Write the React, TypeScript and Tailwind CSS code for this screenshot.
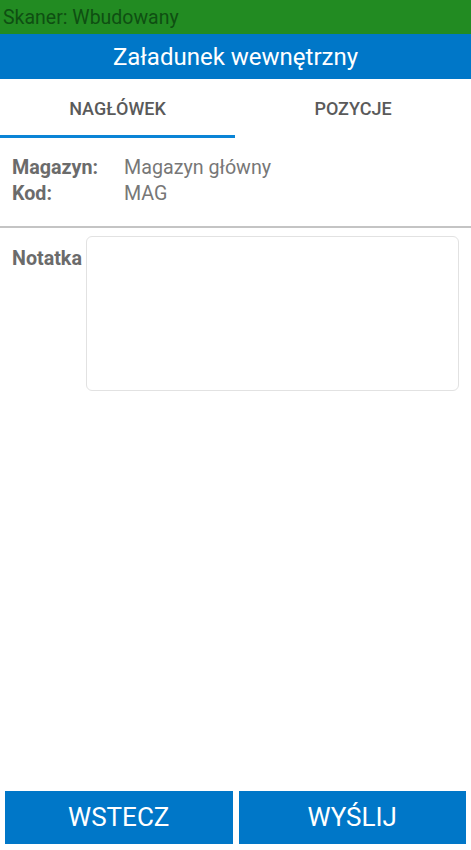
export default function App() {
  return (
    <div
      className="flex h-[850px] w-[471px] flex-col bg-white"
      style={{ fontFamily: "Roboto, 'Liberation Sans', sans-serif" }}
    >
      <div className="flex h-[34px] items-center bg-[#228b22] pl-[3px] pt-[1px] text-[19.5px] text-[#0f4f12]">
        Skaner: Wbudowany
      </div>
      <div className="flex h-[45px] items-center justify-center bg-[#0077c8] pt-[1px] text-[24px] text-white">
        Załadunek wewnętrzny
      </div>

      <div className="flex h-[59px]">
        <div className="flex w-[235px] flex-col">
          <div className="flex flex-1 items-center justify-center pt-[3px] text-[18px] font-medium text-[#5a5a5a]">
            NAGŁÓWEK
          </div>
          <div className="h-[3px] bg-[#0a84d6]" />
        </div>
        <div className="flex flex-1 items-center justify-center text-[18px] font-medium text-[#5a5a5a]">
          POZYCJE
        </div>
      </div>

      <div className="grid grid-cols-[112px_1fr] px-3 pt-[17px] text-[19.7px] leading-[26px]">
        <span className="font-bold text-[#6b6b6b]">Magazyn:</span>
        <span className="text-[#777]">Magazyn główny</span>
        <span className="font-bold text-[#6b6b6b]">Kod:</span>
        <span className="text-[#777]">MAG</span>
      </div>

      <div className="mt-[19px] h-[2px] bg-[#c4c4c4]" />

      <div className="flex pt-[8px] pr-3">
        <span className="w-[86px] shrink-0 pl-3 pt-[8px] text-[19.7px] font-bold text-[#6b6b6b]">
          Notatka
        </span>
        <textarea className="h-[155px] flex-1 resize-none rounded-md border border-[#e2e2e2] outline-none" />
      </div>

      <div className="flex-1" />

      <div className="flex gap-[6px] px-[5px] pb-[6px]">
        <button className="h-[53px] flex-1 bg-[#0077c8] text-[26px] text-white">WSTECZ</button>
        <button className="h-[53px] flex-1 bg-[#0077c8] text-[26px] text-white">WYŚLIJ</button>
      </div>
    </div>
  );
}
